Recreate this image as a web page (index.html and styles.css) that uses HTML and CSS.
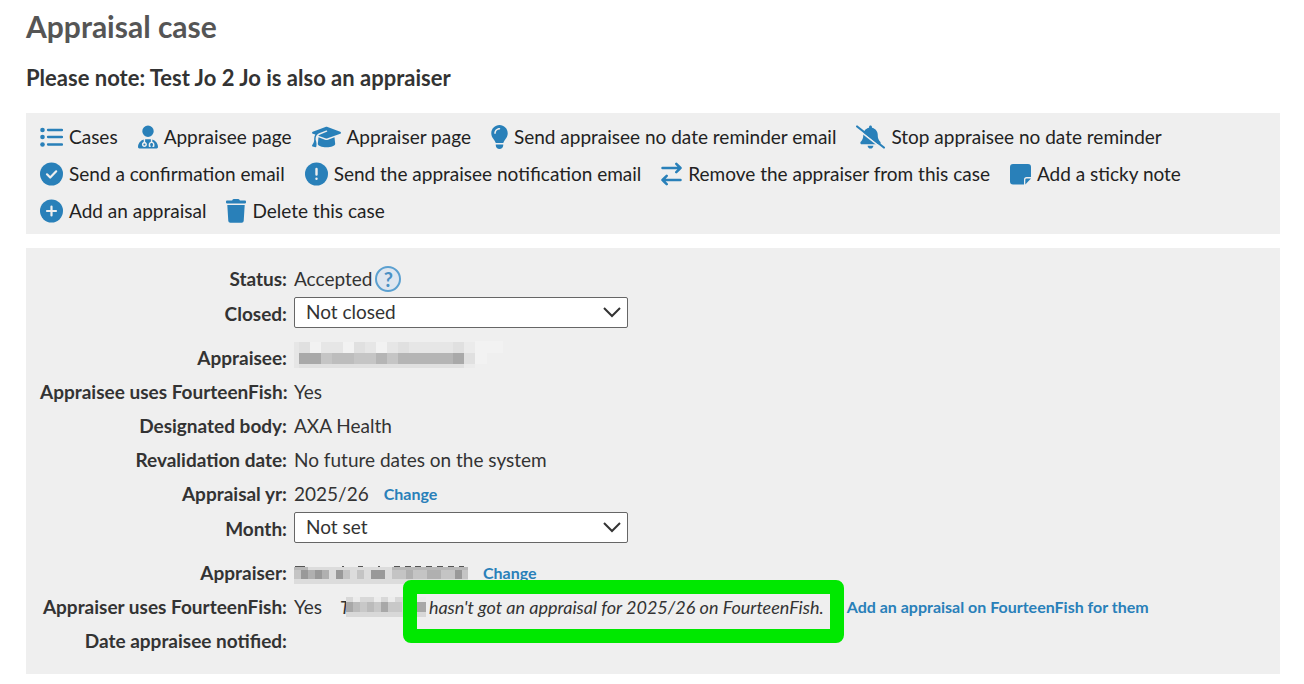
FILE: index.html
```
<!DOCTYPE html>
<html lang="en">
<head>
    <meta charset="UTF-8">
    <meta name="viewport" content="width=device-width, initial-scale=1.0">
    <title>Appraisal case</title>
    <link rel="stylesheet" href="styles.css">
</head>
<body>
    <h1>Appraisal case</h1>
    <h2>Please note: Test Jo 2 Jo is also an appraiser</h2>

    <nav class="toolbar">
        <a href="#">
            <svg width="23" height="24" viewBox="0 0 23 24" fill="currentColor"><circle cx="2.5" cy="5" r="2.3"/><circle cx="2.5" cy="12" r="2.3"/><circle cx="2.5" cy="19.500" r="2.300"/><path d="M8 5h14M8 12h14M8 19.500h14" stroke="currentColor" stroke-width="2.300" stroke-linecap="round"/></svg>
            Cases
        </a>
        <a href="#">
            <svg width="20" height="24" viewBox="0 0 448 512" fill="currentColor"><path d="M224 256A128 128 0 1 0 224 0a128 128 0 1 0 0 256zm-96 55.200C54 332.900 0 401.300 0 482.300C0 498.700 13.300 512 29.700 512H418.300c16.400 0 29.700-13.300 29.700-29.700c0-81-54-149.400-128-171.100V362c27.600 7.100 48 32.200 48 62v40c0 8.800-7.200 16-16 16H336c-8.800 0-16-7.200-16-16s7.200-16 16-16V424c0-17.700-14.300-32-32-32s-32 14.300-32 32v24c8.800 0 16 7.200 16 16s-7.200 16-16 16H256c-8.800 0-16-7.200-16-16V424c0-29.800 20.400-54.900 48-62V304.900c-6-.6-12.100-.9-18.300-.9H178.300c-6.200 0-12.300 .3-18.300 .9v65.400c23.100 6.900 40 28.300 40 53.700c0 30.900-25.100 56-56 56s-56-25.100-56-56c0-25.400 16.900-46.800 40-53.700V311.200zM144 448a24 24 0 1 0 0-48 24 24 0 1 0 0 48z"/></svg>
            Appraisee page
        </a>
        <a href="#">
            <svg width="29" height="24" viewBox="0 0 640 512" fill="currentColor"><path d="M320 32c-8.100 0-16.100 1.400-23.700 4.100L15.800 137.400C6.300 140.900 0 149.900 0 160s6.300 19.100 15.800 22.600l57.900 20.900C57.300 229.300 48 259.800 48 291.900v28.100c0 28.400-10.800 57.700-22.300 80.800c-6.500 13-13.900 25.800-22.500 37.600C0 442.700-.9 448.300 .9 453.400s6 8.900 11.200 10.200l64 16c4.200 1.100 8.700 .3 12.400-2s6.300-6.100 7.100-10.400c8.600-42.800 4.300-81.200-2.100-108.700C90.300 344.300 86 329.800 80 316.500V291.900c0-30.200 10.200-58.700 27.900-81.500c12.900-15.500 29.600-28 49.200-35.700l157-61.700c8.200-3.200 17.500 .8 20.700 9s-.8 17.500-9 20.700l-157 61.700c-12.400 4.900-23.300 12.400-32.200 21.600l159.600 57.600c7.600 2.700 15.600 4.100 23.700 4.100s16.100-1.400 23.700-4.100L624.200 182.600c9.500-3.400 15.800-12.500 15.800-22.600s-6.300-19.100-15.800-22.600L343.700 36.100C336.100 33.400 328.100 32 320 32zM128 408c0 35.300 86 72 192 72s192-36.700 192-72L496.700 262.600 354.500 314c-11.100 4-22.800 6-34.500 6s-23.500-2-34.500-6L143.300 262.600 128 408z"/></svg>
            Appraiser page
        </a>
        <a href="#">
            <svg width="17" height="24" viewBox="10 0 364 512" fill="currentColor"><path d="M272 384c9.600-31.900 29.500-59.100 49.200-86.200c5.200-7.100 10.400-14.200 15.400-21.400c19.800-28.500 31.400-63 31.400-100.300C368 78.800 289.200 0 192 0S16 78.800 16 176c0 37.300 11.600 71.900 31.400 100.300c5 7.200 10.200 14.300 15.400 21.400c19.800 27.100 39.700 54.400 49.200 86.200H272zM192 512c44.200 0 80-35.800 80-80V416H112v16c0 44.200 35.800 80 80 80zM112 176c0 8.800-7.200 16-16 16s-16-7.200-16-16c0-61.900 50.100-112 112-112c8.800 0 16 7.200 16 16s-7.200 16-16 16c-44.200 0-80 35.800-80 80z"/></svg>
            Send appraisee no date reminder email
        </a>
        <a href="#">
            <svg width="29" height="24" viewBox="0 0 640 512" fill="currentColor"><path transform="translate(96)" d="M224 0c-17.700 0-32 14.300-32 32V51.200C119 66 64 130.600 64 208v18.800c0 47-17.300 92.400-48.500 127.600l-7.400 8.300c-8.400 9.400-10.400 22.900-5.300 34.400S19.400 416 32 416H416c12.600 0 24-7.400 29.200-18.900s3.100-25-5.300-34.400l-7.400-8.300C401.300 319.200 384 273.900 384 226.800V208c0-77.400-55-142-128-156.800V32c0-17.700-14.300-32-32-32zm45.300 493.300c12-12 18.700-28.300 18.700-45.300H224 160c0 17 6.700 33.300 18.700 45.300s28.300 18.700 45.300 18.700s33.300-6.700 45.300-18.700z"/><path class="icon-gap" d="M0 57L560 496" stroke-width="38"/><path d="M24 24L616 488" stroke="currentColor" stroke-width="48" stroke-linecap="round"/></svg>
            Stop appraisee no date reminder
        </a>
        <a href="#">
            <svg width="23" height="24" viewBox="0 0 23 24" fill="none"><circle cx="11.500" cy="12" r="11.500" fill="currentColor"/><path class="icon-gap" d="M7 12.300l3.200 3.200 6-6.200" stroke-width="2.200" stroke-linecap="round" stroke-linejoin="round"/></svg>
            Send a confirmation email
        </a>
        <a href="#">
            <svg width="23" height="24" viewBox="0 0 23 24" fill="none"><circle cx="11.500" cy="12" r="11.500" fill="currentColor"/><path class="icon-gap" d="M11.500 7v5.600M11.500 16.600v.2" stroke-width="2.400" stroke-linecap="round"/></svg>
            Send the appraisee notification email
        </a>
        <a href="#">
            <svg width="21" height="24" viewBox="0 0 21 24" fill="none" stroke="currentColor" stroke-width="2.500" stroke-linecap="round" stroke-linejoin="round"><path d="M1.500 6h18M15.300 1.800L19.500 6l-4.200 4.200M19.500 18h-18M5.700 13.800L1.500 18l4.200 4.200"/></svg>
            Remove the appraiser from this case
        </a>
        <a href="#">
            <svg width="21" height="24" viewBox="0 0 21 24" fill="currentColor"><path d="M3 2h15a3 3 0 0 1 3 3v10h-4.500a2.500 2.500 0 0 0-2.500 2.500V22.500H3a3 3 0 0 1-3-3V5a3 3 0 0 1 3-3zM21 16.500l-5.700 6v-4.800a1.200 1.200 0 0 1 1.200-1.200z"/></svg>
            Add a sticky note
        </a>
        <a href="#">
            <svg width="23" height="24" viewBox="0 0 23 24" fill="none"><circle cx="11.500" cy="12" r="11.500" fill="currentColor"/><path class="icon-gap" d="M11.500 7.500v9M7 12h9" stroke-width="2.200" stroke-linecap="round"/></svg>
            Add an appraisal
        </a>
        <a href="#">
            <svg width="20" height="24" viewBox="0 0 20 24" fill="currentColor"><path d="M6.500 .8A1.500 1.500 0 0 1 7.800 0h4.400a1.500 1.500 0 0 1 1.300 .8l.4.700H19a1 1 0 0 1 1 1V3.600a.8.800 0 0 1-.8.800H.8A.8.800 0 0 1 0 3.600V2.500a1 1 0 0 1 1-1h5.100zM1.300 6h17.400l-1 15.900a2 2 0 0 1-2 1.800H4.300a2 2 0 0 1-2-1.800z"/></svg>
            Delete this case
        </a>
    </nav>

    <form class="details">
        <div class="row">
            <span class="label">Status:</span>
            <div class="value">Accepted <button type="button" class="help" aria-label="Help">?</button></div>
        </div>
        <div class="row row-select">
            <label class="label" for="closed">Closed:</label>
            <div class="value">
                <select id="closed"><option>Not closed</option><option>Closed</option></select>
            </div>
        </div>
        <div class="row">
            <span class="label">Appraisee:</span>
            <div class="value">
                <svg class="redacted" width="210" height="34" viewBox="0 0 210 34" shape-rendering="crispEdges">
                    <path fill="#e6e6e6" d="M0 1h170v26H0z"/><path fill="#ebebeb" d="M170 1h11v26h-11z"/><path fill="#f2f2f2" d="M16 1h11v11H16zM49 1h11v11H49zM82 1h11v11H82zM181 0h28v12h-28zM181 12h12v11h-12z"/>
                    <path fill="#e0e0e0" d="M5 1h11v11H5zM60 1h11v11H60zM104 1h11v11h-11zM159 1h11v11h-11zM5 23h165v4H5zM170 12h11v11h-11z"/>
                    <path fill="#b5b5b5" d="M5 12h165v11H5z"/><path fill="#a9a9a9" d="M5 12h22v11H5zM159 12h11v11h-11z"/><path fill="#c5c5c5" d="M27 12h11v11H27zM60 12h22v11H60zM93 12h11v11H93z"/><path fill="#bdbdbd" d="M38 12h22v11H38z"/>
                </svg>
            </div>
        </div>
        <div class="row">
            <span class="label">Appraisee uses FourteenFish:</span>
            <div class="value">Yes</div>
        </div>
        <div class="row">
            <span class="label">Designated body:</span>
            <div class="value">AXA Health</div>
        </div>
        <div class="row">
            <span class="label">Revalidation date:</span>
            <div class="value">No future dates on the system</div>
        </div>
        <div class="row">
            <span class="label">Appraisal yr:</span>
            <div class="value">2025/26 <a href="#" class="change">Change</a></div>
        </div>
        <div class="row row-select">
            <label class="label" for="month">Month:</label>
            <div class="value">
                <select id="month"><option>Not set</option><option>April</option><option>May</option></select>
            </div>
        </div>
        <div class="row">
            <span class="label">Appraiser:</span>
            <div class="value">
                <svg class="redacted" width="174" height="22" viewBox="0 -4 174 22" shape-rendering="crispEdges">
                    <path fill="#dcdcdc" d="M0 1h174v17H0z"/><path fill="#b8b8b8" d="M0 1h14v3H0zM98 1h76v3H98z"/>
                    <path fill="#c4c4c4" d="M0 4h35v9H0zM42 4h14v9H42zM63 4h7v9h-7zM77 4h14v9H77zM98 4h76v9H98z"/>
                    <path fill="#999" d="M7 4h7v9H7zM21 4h7v9h-7zM42 4h7v9h-7zM77 4h14v9h-14zM161 4h7v9h-7z"/><path fill="#b0b0b0" d="M14 4h7v9h-7zM28 4h7v9h-7zM112 4h7v9h-7zM133 4h14v9h-14z"/>
                    <path fill="#555" d="M1 0h10v1H1zM48 0h2v1h-2zM64 0h5v1h-5zM84 0h2v1h-2zM100 0h6v1h-6zM111 0h6v1h-6zM121 0h6v1h-6zM132 0h6v1h-6zM143 0h6v1h-6zM154 0h6v1h-6zM165 0h5v1h-5z"/>
                </svg>
                <a href="#" class="change">Change</a>
            </div>
        </div>
        <div class="row">
            <span class="label">Appraiser uses FourteenFish:</span>
            <div class="value">
                Yes
                <em class="notice">T<svg class="redacted" width="80" height="20" viewBox="0 0 80 20" shape-rendering="crispEdges"><path fill="#d8d8d8" d="M0 0h80v20H0z"/><path fill="#ececec" d="M7 0h7v5H7zM28 0h7v5h-7zM42 0h7v5h-7zM63 0h17v5H63z"/><path fill="#c8c8c8" d="M0 5h56v10H0z"/><path fill="#a8a8a8" d="M0 5h7v10H0zM35 5h7v10h-7zM70 5h10v10H70z"/><path fill="#bbb" d="M7 5h7v10H7zM21 5h7v10h-7z"/></svg>
                    <span class="highlight">hasn't got an appraisal for 2025/26 on FourteenFish.</span>
                </em>
                <a href="#" class="add-link">Add an appraisal on FourteenFish for them</a>
            </div>
        </div>
        <div class="row">
            <span class="label">Date appraisee notified:</span>
            <div class="value"></div>
        </div>
    </form>
</body>
</html>
```
FILE: styles.css
```
* {
    box-sizing: border-box;
}
body {
    font-family: Lato, sans-serif;
    font-size: 19px;
    line-height: 24px;
    color: #333;
    background-color: #fff;
    margin: 0;
    padding: 8px 24px 10px 26px;
}
h1 {
    margin: 0 0 17px;
    font-size: 30px;
    line-height: 36px;
    color: #555;
}
h2 {
    margin: 0 0 18px;
    font-size: 22px;
    line-height: 34px;
}
a {
    color: #2980b9;
    text-decoration: none;
}
.toolbar {
    display: flex;
    flex-wrap: wrap;
    column-gap: 20px;
    background-color: #efefef;
    margin-bottom: 14px;
    padding: 5px 14px;
}
.toolbar a {
    display: flex;
    align-items: center;
    gap: 6px;
    height: 37px;
    color: #222;
}
.toolbar svg {
    flex: none;
    color: #2980b9;
}
.icon-gap {
    stroke: #efefef;
}
.details {
    background-color: #efefef;
    padding: 14px 14px 16px;
}
.row {
    display: grid;
    grid-template-columns: 247px 1fr;
    column-gap: 7px;
    align-items: center;
    min-height: 34px;
}
.label {
    font-weight: bold;
    text-align: right;
    white-space: nowrap;
}
.value {
    display: flex;
    align-items: center;
    white-space: nowrap;
}
.row-select {
    align-items: start;
    min-height: 45px;
    padding-top: 1px;
}
.row-select .label {
    padding-top: 5px;
}
select {
    appearance: none;
    width: 334px;
    height: 31px;
    padding: 0 11px 2px;
    border: 1px solid #666;
    border-radius: 2px;
    font: inherit;
    color: #333;
    background: #fff url("data:image/svg+xml,%3Csvg xmlns='http://www.w3.org/2000/svg' width='18' height='11' fill='none' stroke='%23333' stroke-width='2'%3E%3Cpath d='M1 1l8 8 8-8'/%3E%3C/svg%3E") no-repeat right 6px center;
}
.help {
    width: 26px;
    height: 26px;
    margin-left: 3px;
    padding: 0;
    border: 2px solid #5ba0d0;
    border-radius: 50%;
    background-color: #dfe6ef;
    color: #4a90c4;
    font: bold 20px/20px Lato, sans-serif;
}
.redacted {
    flex: none;
}
.change {
    margin-left: 15px;
    font-size: 16px;
    font-weight: bold;
}
.notice {
    display: flex;
    align-items: center;
    margin-left: 18px;
    font-size: 18px;
}
.notice .redacted {
    margin-left: -4px;
}
.highlight {
    position: relative;
    margin-left: 3px;
}
/* green marker drawn round the message */
.highlight::after {
    content: "";
    position: absolute;
    inset: -15px -20px -24px -26px;
    border: 14px solid #00e800;
    border-radius: 8px;
}
.add-link {
    margin-left: 23px;
    font-size: 16px;
    font-weight: bold;
}
```
